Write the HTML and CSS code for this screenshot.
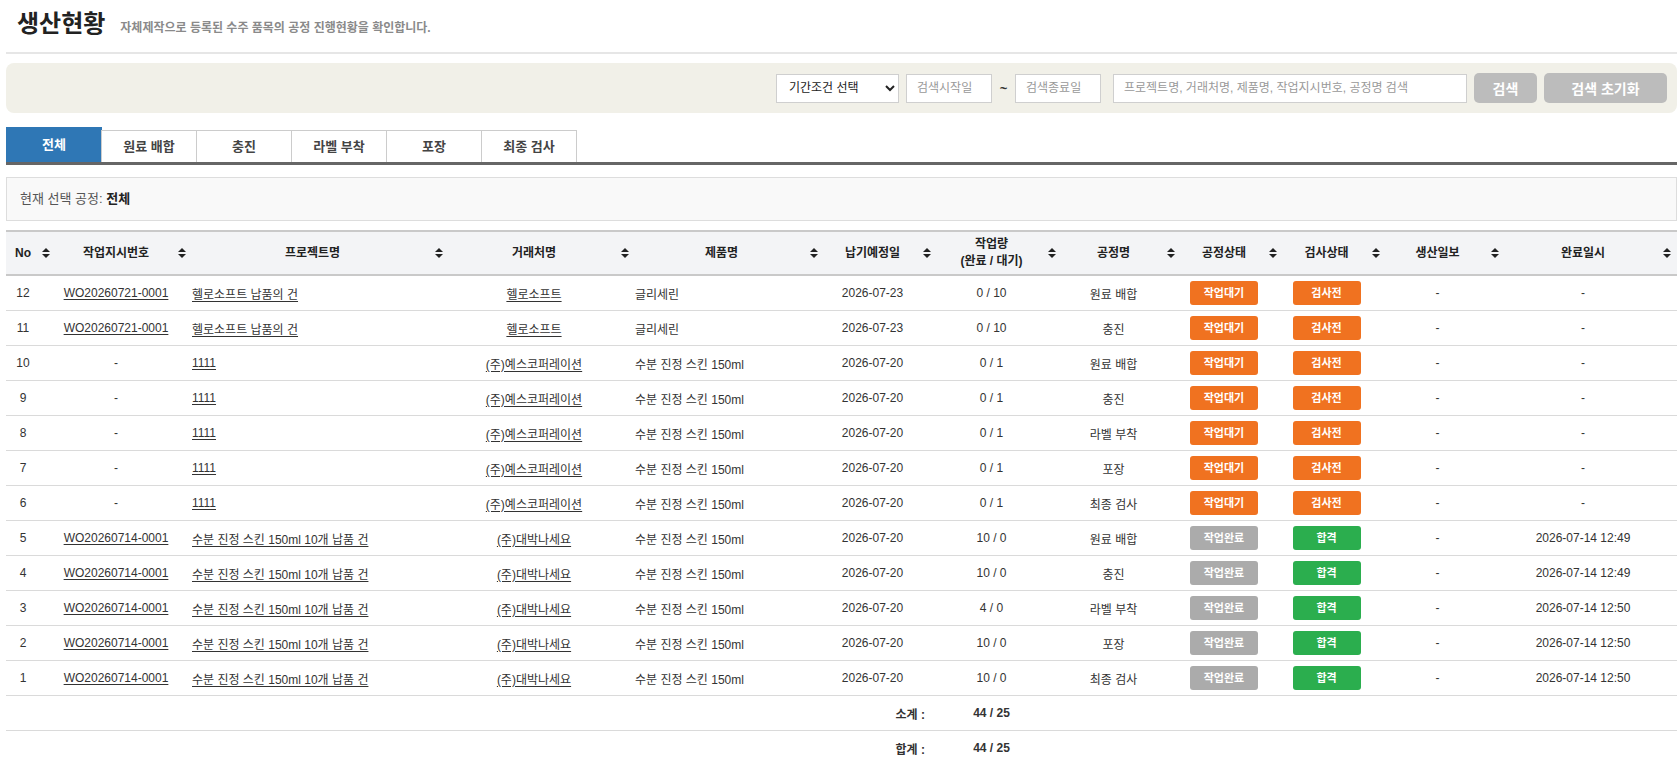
FILE: index.html
```html
<!DOCTYPE html>
<html lang="ko">
<head>
  <meta charset="UTF-8">
  <meta name="viewport" content="width=device-width, initial-scale=1.0">
  <title>생산현황</title>
  <link rel="stylesheet" href="styles.css">
</head>
<body>
<div class="page">

  <!-- Page title -->
  <div class="page-head">
    <h1>생산현황</h1>
    <span class="desc">자체제작으로 등록된 수주 품목의 공정 진행현황을 확인합니다.</span>
  </div>

  <!-- Search -->
  <form class="search-bar">
    <select class="period">
      <option>기간조건 선택</option>
    </select>
    <input class="date" type="text" placeholder="검색시작일">
    <span class="tilde">~</span>
    <input class="date date-end" type="text" placeholder="검색종료일">
    <input class="keyword" type="text" placeholder="프로젝트명, 거래처명, 제품명, 작업지시번호, 공정명 검색">
    <button type="button" class="btn">검색</button>
    <button type="button" class="btn btn-reset">검색 초기화</button>
  </form>

  <!-- Process tabs -->
  <ul class="tabs">
    <li class="active">전체</li>
    <li>원료 배합</li>
    <li>충진</li>
    <li>라벨 부착</li>
    <li>포장</li>
    <li>최종 검사</li>
  </ul>

  <div class="current">현재 선택 공정: <b>전체</b></div>

  <!-- Status table -->
  <table class="grid">
    <colgroup>
      <col style="width:50px"><col style="width:136px"><col style="width:257px"><col style="width:186px">
      <col style="width:189px"><col style="width:113px"><col style="width:125px"><col style="width:119px">
      <col style="width:102px"><col style="width:103px"><col style="width:119px"><col style="width:172px">
    </colgroup>
    <thead>
      <tr>
        <th class="sort">No</th>
        <th class="sort">작업지시번호</th>
        <th class="sort">프로젝트명</th>
        <th class="sort">거래처명</th>
        <th class="sort">제품명</th>
        <th class="sort">납기예정일</th>
        <th class="sort">작업량<br>(완료 / 대기)</th>
        <th class="sort">공정명</th>
        <th class="sort">공정상태</th>
        <th class="sort">검사상태</th>
        <th class="sort">생산일보</th>
        <th class="sort">완료일시</th>
      </tr>
    </thead>
    <tbody>
      <tr>
        <td>12</td><td><a href="#">WO20260721-0001</a></td><td class="left"><a href="#">헬로소프트 납품의 건</a></td>
        <td><a href="#">헬로소프트</a></td><td class="left">글리세린</td><td>2026-07-23</td><td>0 / 10</td><td>원료 배합</td>
        <td><span class="badge wait">작업대기</span></td><td><span class="badge wait">검사전</span></td><td>-</td><td>-</td>
      </tr>
      <tr>
        <td>11</td><td><a href="#">WO20260721-0001</a></td><td class="left"><a href="#">헬로소프트 납품의 건</a></td>
        <td><a href="#">헬로소프트</a></td><td class="left">글리세린</td><td>2026-07-23</td><td>0 / 10</td><td>충진</td>
        <td><span class="badge wait">작업대기</span></td><td><span class="badge wait">검사전</span></td><td>-</td><td>-</td>
      </tr>
      <tr>
        <td>10</td><td>-</td><td class="left"><a href="#">1111</a></td>
        <td><a href="#">(주)예스코퍼레이션</a></td><td class="left">수분 진정 스킨 150ml</td><td>2026-07-20</td><td>0 / 1</td><td>원료 배합</td>
        <td><span class="badge wait">작업대기</span></td><td><span class="badge wait">검사전</span></td><td>-</td><td>-</td>
      </tr>
      <tr>
        <td>9</td><td>-</td><td class="left"><a href="#">1111</a></td>
        <td><a href="#">(주)예스코퍼레이션</a></td><td class="left">수분 진정 스킨 150ml</td><td>2026-07-20</td><td>0 / 1</td><td>충진</td>
        <td><span class="badge wait">작업대기</span></td><td><span class="badge wait">검사전</span></td><td>-</td><td>-</td>
      </tr>
      <tr>
        <td>8</td><td>-</td><td class="left"><a href="#">1111</a></td>
        <td><a href="#">(주)예스코퍼레이션</a></td><td class="left">수분 진정 스킨 150ml</td><td>2026-07-20</td><td>0 / 1</td><td>라벨 부착</td>
        <td><span class="badge wait">작업대기</span></td><td><span class="badge wait">검사전</span></td><td>-</td><td>-</td>
      </tr>
      <tr>
        <td>7</td><td>-</td><td class="left"><a href="#">1111</a></td>
        <td><a href="#">(주)예스코퍼레이션</a></td><td class="left">수분 진정 스킨 150ml</td><td>2026-07-20</td><td>0 / 1</td><td>포장</td>
        <td><span class="badge wait">작업대기</span></td><td><span class="badge wait">검사전</span></td><td>-</td><td>-</td>
      </tr>
      <tr>
        <td>6</td><td>-</td><td class="left"><a href="#">1111</a></td>
        <td><a href="#">(주)예스코퍼레이션</a></td><td class="left">수분 진정 스킨 150ml</td><td>2026-07-20</td><td>0 / 1</td><td>최종 검사</td>
        <td><span class="badge wait">작업대기</span></td><td><span class="badge wait">검사전</span></td><td>-</td><td>-</td>
      </tr>
      <tr>
        <td>5</td><td><a href="#">WO20260714-0001</a></td><td class="left"><a href="#">수분 진정 스킨 150ml 10개 납품 건</a></td>
        <td><a href="#">(주)대박나세요</a></td><td class="left">수분 진정 스킨 150ml</td><td>2026-07-20</td><td>10 / 0</td><td>원료 배합</td>
        <td><span class="badge done">작업완료</span></td><td><span class="badge pass">합격</span></td><td>-</td><td>2026-07-14 12:49</td>
      </tr>
      <tr>
        <td>4</td><td><a href="#">WO20260714-0001</a></td><td class="left"><a href="#">수분 진정 스킨 150ml 10개 납품 건</a></td>
        <td><a href="#">(주)대박나세요</a></td><td class="left">수분 진정 스킨 150ml</td><td>2026-07-20</td><td>10 / 0</td><td>충진</td>
        <td><span class="badge done">작업완료</span></td><td><span class="badge pass">합격</span></td><td>-</td><td>2026-07-14 12:49</td>
      </tr>
      <tr>
        <td>3</td><td><a href="#">WO20260714-0001</a></td><td class="left"><a href="#">수분 진정 스킨 150ml 10개 납품 건</a></td>
        <td><a href="#">(주)대박나세요</a></td><td class="left">수분 진정 스킨 150ml</td><td>2026-07-20</td><td>4 / 0</td><td>라벨 부착</td>
        <td><span class="badge done">작업완료</span></td><td><span class="badge pass">합격</span></td><td>-</td><td>2026-07-14 12:50</td>
      </tr>
      <tr>
        <td>2</td><td><a href="#">WO20260714-0001</a></td><td class="left"><a href="#">수분 진정 스킨 150ml 10개 납품 건</a></td>
        <td><a href="#">(주)대박나세요</a></td><td class="left">수분 진정 스킨 150ml</td><td>2026-07-20</td><td>10 / 0</td><td>포장</td>
        <td><span class="badge done">작업완료</span></td><td><span class="badge pass">합격</span></td><td>-</td><td>2026-07-14 12:50</td>
      </tr>
      <tr>
        <td>1</td><td><a href="#">WO20260714-0001</a></td><td class="left"><a href="#">수분 진정 스킨 150ml 10개 납품 건</a></td>
        <td><a href="#">(주)대박나세요</a></td><td class="left">수분 진정 스킨 150ml</td><td>2026-07-20</td><td>10 / 0</td><td>최종 검사</td>
        <td><span class="badge done">작업완료</span></td><td><span class="badge pass">합격</span></td><td>-</td><td>2026-07-14 12:50</td>
      </tr>
    </tbody>
    <tfoot>
      <tr class="sub">
        <td colspan="6" class="label">소계 :</td><td class="sum">44 / 25</td><td colspan="5"></td>
      </tr>
      <tr class="total">
        <td colspan="6" class="label">합계 :</td><td class="sum">44 / 25</td><td colspan="5"></td>
      </tr>
    </tfoot>
  </table>

</div>
</body>
</html>
```

FILE: styles.css
```css
html {
  overflow: hidden;
}

body {
  margin: 0;
  font-family: "Liberation Sans", "Noto Sans CJK KR", sans-serif;
  font-size: 12px;
  color: #333;
  background: #fff;
}

.page {
  padding: 0 2px 0 6px;
}

/* Page title */
.page-head {
  display: flex;
  align-items: baseline;
  padding: 8px 0 12px 11px;
  border-bottom: 2px solid #e6e6e6;
}

.page-head h1 {
  margin: 0;
  font-size: 24px;
  line-height: 32px;
  color: #222;
}

.page-head .desc {
  margin-left: 15px;
  font-size: 12px;
  font-weight: bold;
  color: #8a8a8a;
}

/* Search bar */
.search-bar {
  display: flex;
  align-items: center;
  justify-content: flex-end;
  height: 50px;
  margin: 9px 0 0;
  padding-right: 10px;
  background: #f1f0e8;
  border-radius: 8px;
}

.search-bar select,
.search-bar input {
  box-sizing: border-box;
  height: 29px;
  border: 1px solid #cfcfcf;
  background: #fff;
  font-family: inherit;
  font-size: 12px;
  color: #333;
}

.search-bar select {
  width: 123px;
  padding: 0 4px 0 8px;
  color: #222;
}

.search-bar input {
  padding: 0 10px;
}

.search-bar input::placeholder {
  color: #999;
}

.search-bar .date {
  width: 86px;
  margin-left: 7px;
}

.search-bar .date-end {
  margin-left: 0;
}

.search-bar .tilde {
  width: 23px;
  text-align: center;
  font-size: 13px;
  font-weight: bold;
}

.search-bar .keyword {
  width: 354px;
  margin-left: 12px;
}

.btn {
  height: 30px;
  margin-left: 7px;
  padding: 0;
  width: 63px;
  border: none;
  border-radius: 5px;
  background: #bcbcbc;
  color: #fff;
  font-family: inherit;
  font-size: 14px;
  font-weight: bold;
}

.btn-reset {
  width: 123px;
}

/* Tabs */
.tabs {
  display: flex;
  align-items: flex-end;
  margin: 14px 0 0;
  padding: 0;
  list-style: none;
  border-bottom: 3px solid #666;
}

.tabs li {
  box-sizing: border-box;
  width: 96px;
  height: 32px;
  margin-left: -1px;
  border: 1px solid #ccc;
  border-bottom: none;
  background: #fff;
  font-size: 13px;
  font-weight: bold;
  color: #444;
  line-height: 31px;
  text-align: center;
}

.tabs li.active {
  height: 35px;
  margin-left: 0;
  border-color: #2f77b5;
  background: #2f77b5;
  color: #fff;
  line-height: 34px;
}

/* Current process */
.current {
  box-sizing: border-box;
  height: 44px;
  margin-top: 12px;
  padding-left: 13px;
  border: 1px solid #ddd;
  background: #f9f9f9;
  font-size: 13px;
  line-height: 42px;
  color: #555;
}

.current b {
  color: #222;
}

/* Table */
.grid {
  width: 1671px;
  margin-top: 9px;
  border-collapse: collapse;
  table-layout: fixed;
}

.grid th,
.grid td {
  padding: 0 16px 0 0;
  text-align: center;
  white-space: nowrap;
}

.grid thead th {
  position: relative;
  height: 42px;
  background: #f3f4f6;
  border-top: 2px solid #c9c9c9;
  border-bottom: 2px solid #c9c9c9;
  font-weight: bold;
  color: #222;
  line-height: 17px;
}

.grid th.sort::before,
.grid th.sort::after {
  content: "";
  position: absolute;
  right: 6px;
  border-left: 4px solid transparent;
  border-right: 4px solid transparent;
}

.grid th.sort::before {
  top: calc(50% - 5px);
  border-bottom: 4px solid #222;
}

.grid th.sort::after {
  top: calc(50% + 1px);
  border-top: 4px solid #222;
}

.grid tbody td {
  height: 34px;
  border-bottom: 1px solid #dadada;
}

.grid td.left {
  text-align: left;
  padding-left: 0;
}

.grid a {
  color: #333;
  text-decoration: underline;
  text-underline-offset: 2px;
}

.badge {
  display: inline-block;
  width: 68px;
  height: 24px;
  border-radius: 3px;
  color: #fff;
  font-size: 11px;
  font-weight: bold;
  line-height: 24px;
}

.badge.wait {
  background: #f07220;
}

.badge.done {
  background: #ababab;
}

.badge.pass {
  background: #2bae4e;
}

.grid tfoot td {
  height: 34px;
  font-weight: bold;
}

.grid tfoot .label {
  text-align: right;
  padding-right: 12px;
}

.grid tr.sub td {
  border-bottom: 1px solid #dadada;
}
```
